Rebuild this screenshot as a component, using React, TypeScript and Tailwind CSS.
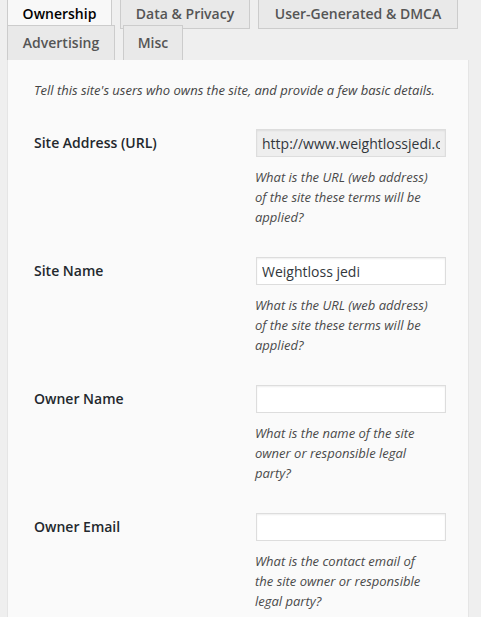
import React from "react"

const rowTabs = [
  [
    { label: "Ownership", w: "w-[105px]", active: true },
    { label: "Data & Privacy", w: "w-[130px]" },
    { label: "User-Generated & DMCA", w: "w-[200px]" },
  ],
  [
    { label: "Advertising", w: "w-[108px]" },
    { label: "Misc", w: "w-[60px]" },
  ],
]

const fields = [
  {
    label: "Site Address (URL)",
    value: "http://www.weightlossjedi.com",
    readOnly: true,
    help: "What is the URL (web address) of the site these terms will be applied?",
  },
  {
    label: "Site Name",
    value: "Weightloss jedi",
    help: "What is the URL (web address) of the site these terms will be applied?",
  },
  {
    label: "Owner Name",
    value: "",
    help: "What is the name of the site owner or responsible legal party?",
  },
  {
    label: "Owner Email",
    value: "",
    help: "What is the contact email of the site owner or responsible legal party?",
  },
]

export default function App() {
  return (
    <div
      className="w-[481px] h-[617px] overflow-hidden bg-[#efefef] text-[#23282d]"
      style={{ fontFamily: '"Open Sans", "Liberation Sans", sans-serif' }}
    >
      {/* first row of tabs, tops cut off */}
      <div className="flex gap-2 pl-[7px] -mt-[6px] relative z-0">
        {rowTabs[0].map((t) => (
          <div
            key={t.label}
            className={`${t.w} h-[35px] pt-[9px] flex justify-center border border-[#cccccc] text-[14px] font-semibold leading-[20px] ${
              t.active ? "bg-[#f8f8f8] text-black" : "bg-[#e9e9e9] text-[#555555]"
            }`}
          >
            {t.label}
          </div>
        ))}
      </div>

      {/* second row */}
      <div className="flex gap-2 pl-[7px] -mt-[4px] relative z-10">
        {rowTabs[1].map((t) => (
          <div
            key={t.label}
            className={`${t.w} h-[35px] flex items-center justify-center border border-b-0 border-[#cccccc] bg-[#e9e9e9] text-[#555555] text-[14px] font-semibold leading-[20px]`}
          >
            {t.label}
          </div>
        ))}
      </div>

      {/* panel */}
      <div className="ml-[7px] w-[462px] bg-[#fafafa] border-l border-r border-[#e5e5e5] pl-[26px] pt-[20px] pb-10">
        <p className="text-[13px] italic leading-[20px] text-[#444444]">
          Tell this site's users who owns the site, and provide a few basic details.
        </p>

        <div className="mt-[14px]">
          {fields.map((f) => (
            <div key={f.label} className="flex py-[15px]">
              <div className="w-[221px] mt-[4px] text-[14px] font-semibold leading-[20px] text-[#23282d]">
                {f.label}
              </div>
              <div>
                <input
                  readOnly
                  value={f.value}
                  className={`block w-[190px] h-[28px] ml-[1px] px-[5px] border border-[#dddddd] shadow-[inset_0_1px_2px_rgba(0,0,0,0.07)] text-[14px] text-[#32373c] outline-none ${
                    f.readOnly ? "bg-[#eeeeee]" : "bg-white"
                  }`}
                  style={{ fontFamily: '"Open Sans", "Liberation Sans", sans-serif' }}
                />
                <p className="w-[177px] mt-[10px] text-[13px] italic leading-[20px] text-[#4a4a4a]">
                  {f.help}
                </p>
              </div>
            </div>
          ))}
        </div>
      </div>
    </div>
  )
}
